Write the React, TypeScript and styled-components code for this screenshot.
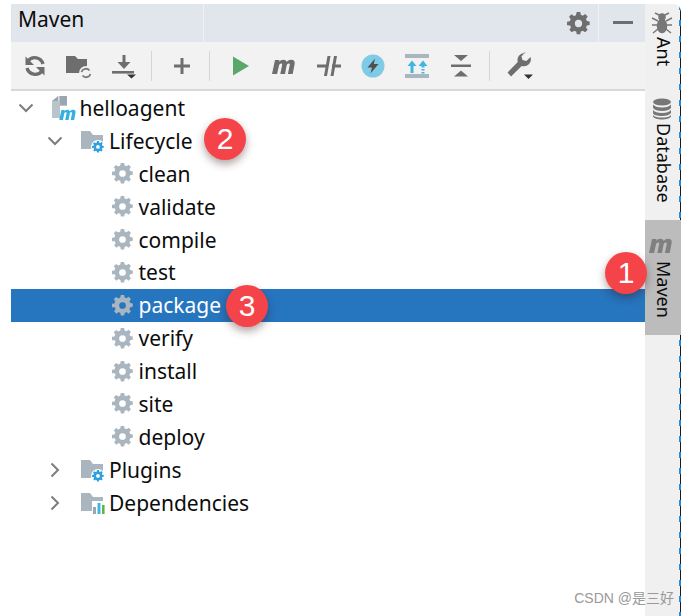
import React from "react";
import styled, { createGlobalStyle } from "styled-components";

const GlobalStyle = createGlobalStyle`
  html, body {
    margin: 0;
    padding: 0;
    background: #ffffff;
  }
`;

const Page = styled.div`
  position: relative;
  width: 689px;
  height: 616px;
  overflow: hidden;
  background: #ffffff;
  padding: 4px 0 0 11px;
  box-sizing: border-box;
  font-family: "Noto Sans", "Open Sans", sans-serif;
  color: #0c0c0c;
`;

const Frame = styled.div`
  display: flex;
  width: 670px;
  height: 612px;
`;

const Main = styled.div`
  flex: 1;
  display: flex;
  flex-direction: column;
  min-width: 0;
`;

const Header = styled.div`
  height: 38px;
  flex: none;
  display: flex;
  align-items: center;
  background: #e1e5ec;
`;

const Title = styled.div`
  width: 193px;
  height: 100%;
  box-sizing: border-box;
  padding-left: 7px;
  font-size: 21px;
  line-height: 31px;
  border-right: 1px solid #f0f2f5;
`;

const HeaderSpacer = styled.div`
  flex: 1;
`;

const HeaderAction = styled.div<{ $width: number; $divider?: boolean }>`
  width: ${(p) => p.$width}px;
  height: 100%;
  flex: none;
  display: flex;
  align-items: center;
  justify-content: center;
  border-right: ${(p) => (p.$divider ? "1px solid #f0f2f5" : "none")};
`;

const Toolbar = styled.div`
  height: 47px;
  flex: none;
  display: flex;
  align-items: center;
  padding-left: 2px;
  background: #f2f2f2;
  border-bottom: 2px solid #d8d8d8;
`;

const ToolSlot = styled.div`
  width: 44px;
  height: 30px;
  display: flex;
  align-items: center;
  justify-content: center;
`;

const ToolDivider = styled.div<{ $before: number; $after: number }>`
  width: 1px;
  height: 30px;
  margin: 0 ${(p) => p.$after}px 0 ${(p) => p.$before}px;
  background: #d6d6d6;
`;

const Tree = styled.div`
  padding-top: 0.6px;
  display: flex;
  flex-direction: column;
`;

const Row = styled.div<{ $depth: number; $selected?: boolean }>`
  height: 32.875px;
  display: flex;
  align-items: center;
  padding-left: ${(p) => 4.5 + p.$depth * 29.5}px;
  background: ${(p) => (p.$selected ? "#2675bf" : "transparent")};
  color: ${(p) => (p.$selected ? "#ffffff" : "#0c0c0c")};
  font-size: 21px;
`;

const Arrow = styled.div`
  width: 35px;
  flex: none;
  display: flex;
  align-items: center;
`;

const NodeIcon = styled.div`
  width: 25px;
  height: 26px;
  flex: none;
  display: flex;
  align-items: center;
  justify-content: center;
  margin-right: 4px;
`;

const Sidebar = styled.div`
  width: 36px;
  flex: none;
  display: flex;
  flex-direction: column;
  border-top-right-radius: 8px;
  background:
    repeating-linear-gradient(to bottom, #1f8ae0 0 6px, transparent 6px 16px) right 0 top 0 / 2px 100% no-repeat,
    linear-gradient(#1a1a1a, #1a1a1a) right 0 top 0 / 1px 100% no-repeat,
    #f0f0f0;
`;

const SideTab = styled.div<{ $height: number; $active?: boolean }>`
  height: ${(p) => p.$height}px;
  display: flex;
  flex-direction: column;
  align-items: center;
  gap: ${(p) => (p.$active ? 6 : 3)}px;
  padding: ${(p) => (p.$active ? 15 : 8)}px 2px 0 0;
  box-sizing: border-box;
  background: ${(p) => (p.$active ? "#bcbcbc" : "transparent")};
`;

const SideLabel = styled.span`
  writing-mode: vertical-rl;
  padding-left: 3px;
  font-size: 18px;
  line-height: 22px;
  color: #0c0c0c;
`;

const Badge = styled.div<{ $x: number; $y: number }>`
  position: absolute;
  left: ${(p) => p.$x - 21}px;
  top: ${(p) => p.$y - 21}px;
  width: 42px;
  height: 42px;
  border-radius: 50%;
  background: #f54449;
  color: #ffffff;
  font-family: "Liberation Sans", Arial, sans-serif;
  font-size: 30px;
  line-height: 42px;
  text-align: center;
  box-shadow: 0 4px 8px rgba(60, 20, 20, 0.4);
`;

const Watermark = styled.div`
  position: absolute;
  right: 15px;
  bottom: 9px;
  font-family: "Liberation Sans", "Noto Sans CJK SC", sans-serif;
  font-size: 14px;
  line-height: 18px;
  color: #999999;
`;

const GEAR =
  "M10.3 1h3.4l.5 2.7c.7.2 1.3.5 1.9.8l2.3-1.6 2.4 2.4-1.6 2.3c.3.6.6 1.2.8 1.9l2.7.5v3.4l-2.7.5c-.2.7-.5 1.3-.8 1.9l1.6 2.3-2.4 2.4-2.3-1.6c-.6.3-1.2.6-1.9.8l-.5 2.7h-3.4l-.5-2.7c-.7-.2-1.3-.5-1.9-.8l-2.3 1.6-2.4-2.4 1.6-2.3c-.3-.6-.6-1.2-.8-1.9L1 13.7v-3.4l2.7-.5c.2-.7.5-1.3.8-1.9L2.9 5.6l2.4-2.4 2.3 1.6c.6-.3 1.2-.6 1.900-.8zM12 8.500a3.500 3.500 0 1 0 0 7 3.500 3.500 0 0 0 0-7z";

const M_SHAPE =
  "M1 18 4 4h4.4l-.3 1.8C9.2 4.400 10.700 3.700 12.300 3.700c1.800 0 3 .8 3.400 2.300 1.200-1.500 2.800-2.300 4.500-2.300 2.800 0 4 1.700 3.400 4.500L21.700 18h-4.800l1.800-8.700c.3-1.300-.1-1.900-1-1.900-.9 0-1.800.7-2.100 2L14 18H9.300l1.800-8.700c.3-1.300-.1-1.900-1-1.900-.9 0-1.800.7-2.100 2L6.100 18z";

const Gear = ({ size, color }: { size: number; color: string }) => (
  <svg width={size} height={size} viewBox="0 0 24 24">
    <path d={GEAR} fill={color} fillRule="evenodd" />
  </svg>
);

const Chevron = ({ open }: { open: boolean }) => (
  <svg width="20" height="20" viewBox="0 0 20 20" fill="none" stroke="#7d7d7d" strokeWidth="2">
    {open ? <path d="M3.5 6.5 10 13l6.5-6.5" /> : <path d="M6.5 3.5 13 10l-6.5 6.5" />}
  </svg>
);

const ModuleIcon = () => (
  <svg width="25" height="26" viewBox="0 0 25 26">
    <path d="M1 6h6.500v-5H16v10H9v12H1z" fill="#b9c4cb" />
    <path d="M9 1h7v9H9z" fill="#9aa7b0" />
    <path d="M1 6l6-5v5z" fill="#9aa7b0" />
    <g transform="translate(7.500 12) scale(.72)">
      <path d={M_SHAPE} fill="#35b0e2" />
    </g>
  </svg>
);

const FolderBase = () => <path d="M1 3h9l3 4h10v14H1z" fill="#a9b6bf" />;

const FolderGear = () => (
  <svg width="25" height="26" viewBox="0 0 25 26">
    <FolderBase />
    <circle cx="18" cy="19" r="7" fill="#ffffff" />
    <g transform="translate(11.500 12.500) scale(.54)">
      <path d={GEAR} fill="#2f9fe0" fillRule="evenodd" />
    </g>
  </svg>
);

const FolderBars = () => (
  <svg width="25" height="26" viewBox="0 0 25 26">
    <FolderBase />
    <path d="M12 11h13v15H12z" fill="#ffffff" />
    <path d="M13 17h3v7h-3z" fill="#9aa7b0" />
    <path d="M17.500 13h3v11h-3z" fill="#40b6e0" />
    <path d="M22 15h2.600v9H22z" fill="#62b543" />
  </svg>
);

const RefreshIcon = () => (
  <svg width="24" height="24" viewBox="0 0 24 24" fill="none" stroke="#6e6e6e" strokeWidth="3.400">
    <path d="M20 10A8.500 8.500 0 0 0 5 7" />
    <path d="M4 14A8.500 8.500 0 0 0 19 17" />
    <path d="M2.500 2.500v8.500H11z" fill="#6e6e6e" stroke="none" />
    <path d="M21.500 21.500V13H13z" fill="#6e6e6e" stroke="none" />
  </svg>
);

const FolderRefreshIcon = () => (
  <svg width="26" height="26" viewBox="0 0 26 26">
    <path d="M0 3h9l3 3h9v14H0z" fill="#6e6e6e" />
    <circle cx="20" cy="20" r="7" fill="#f2f2f2" />
    <path d="M15.500 19a4.600 4.600 0 0 1 8-1.500M24.500 21a4.600 4.600 0 0 1-8 1.500" fill="none" stroke="#7b7b7b" strokeWidth="1.800" />
  </svg>
);

const DownloadIcon = () => (
  <svg width="26" height="26" viewBox="-2 0 26 26">
    <path d="M10.500 2h3v7h5l-6.500 7-6.500-7h5z" fill="#6e6e6e" />
    <path d="M0 18h22v2.600H0z" fill="#6e6e6e" />
    <path d="M15 21.500h9l-4.500 4z" fill="#333333" />
  </svg>
);

const PlusIcon = () => (
  <svg width="20" height="20" viewBox="0 0 20 20">
    <path d="M8.500 2h3v6.500H18v3h-6.500V18h-3v-6.500H2v-3h6.500z" fill="#6e6e6e" />
  </svg>
);

const PlayIcon = () => (
  <svg width="20" height="22" viewBox="0 0 20 22">
    <path d="M2 1.500 18 11 2 20.500z" fill="#59a869" />
  </svg>
);

const MavenIcon = ({ color }: { color: string }) => (
  <svg width="28" height="20" viewBox="0 0 28 20">
    <path d={M_SHAPE} fill={color} />
  </svg>
);

const SkipTestsIcon = () => (
  <svg width="26" height="26" viewBox="0 0 26 26">
    <path d="M1 11.500h8h1v3H1zM16 11.500h9v3h-9z" fill="#6e6e6e" />
    <path d="M11.500 3h3l-3.500 20H8zM18 3h3l-3.500 20h-3z" fill="#6e6e6e" />
  </svg>
);

const BoltIcon = () => (
  <svg width="24" height="24" viewBox="0 0 24 24">
    <circle cx="12" cy="12" r="11.500" fill="#7fcbe6" />
    <path d="M14 4.500 6.500 13.500H11l-1.500 6 8-9.500h-4.700z" fill="#4f4f4f" />
  </svg>
);

const ShowDepsIcon = () => (
  <svg width="26" height="26" viewBox="0 0 26 26">
    <path d="M1 1h24v4H1zM1 21h24v4H1z" fill="#a9b6bf" />
    <path d="M8 7.500 12.500 13h-3v7h-3v-7h-3z" fill="#40b6e0" />
    <path d="M19 7.500 23.500 13h-3v1.500h-3V13h-3zM17.500 16h3v1.500h-3zM17.500 19h3v1.500h-3z" fill="#40b6e0" />
  </svg>
);

const CollapseIcon = () => (
  <svg width="22" height="24" viewBox="0 0 22 24">
    <path d="M4 1h14l-7 6z" fill="#6e6e6e" />
    <path d="M1 10.500h20v2.500H1z" fill="#6e6e6e" />
    <path d="M11 16.500l7 6H4z" fill="#6e6e6e" />
  </svg>
);

const WrenchIcon = () => (
  <svg width="28" height="28" viewBox="0 0 28 28">
    <path
      d="M18.500 1a7 7 0 0 0-6.700 9L1.500 20.500 5 24.500l10.700-10.600a7 7 0 0 0 8.800-8.900l-4.100 4-3.900-.9-1-3.900 4-4c-.3 0-.6-.2-1-.2z"
      fill="#6e6e6e"
    />
    <path d="M18 22.500h9l-4.500 4.500z" fill="#333333" />
  </svg>
);

const AntIcon = () => (
  <svg width="22" height="22" viewBox="0 0 22 22" fill="none" stroke="#777777" strokeWidth="1.500">
    <ellipse cx="11" cy="5" rx="3" ry="3" fill="#777777" />
    <ellipse cx="11" cy="14" rx="4.500" ry="6.500" fill="#777777" />
    <path d="M8 3 4 1M14 3l4-2M7 9 1 6M15 9l6-3M6.500 13H1M15.500 13H21M7 17l-5 4M15 17l5 4" />
  </svg>
);

const DatabaseIcon = () => (
  <svg width="20" height="22" viewBox="0 0 20 22">
    <ellipse cx="10" cy="4" rx="9" ry="3.500" fill="#777777" />
    <path d="M1 6.500c1.500 2 4.500 3 9 3s7.500-1 9-3V10c-1.500 2-4.500 3-9 3s-7.500-1-9-3z" fill="#777777" />
    <path d="M1 12c1.500 2 4.500 3 9 3s7.500-1 9-3v3c-1.500 2-4.500 3-9 3s-9-1-9-3z" fill="#777777" />
    <path d="M1 17c1.500 2 4.500 2.500 9 2.500s7.500-.5 9-2.500v1.500c-1 2-4.500 3-9 3s-8-1-9-3z" fill="#777777" />
  </svg>
);

const MinimizeIcon = () => (
  <svg width="22" height="4" viewBox="-2 0 22 4">
    <path d="M0 0h20v3H0z" fill="#6e6e6e" />
  </svg>
);

const phases = ["clean", "validate", "compile", "test", "package", "verify", "install", "site", "deploy"];

export default function App() {
  return (
    <Page>
      <GlobalStyle />
      <Frame>
        <Main>
          <Header>
            <Title>Maven</Title>
            <HeaderSpacer />
            <HeaderAction $width={40} $divider>
              <Gear size={25} color="#6e6e6e" />
            </HeaderAction>
            <HeaderAction $width={46}>
              <MinimizeIcon />
            </HeaderAction>
          </Header>
          <Toolbar>
            <ToolSlot><RefreshIcon /></ToolSlot>
            <ToolSlot><FolderRefreshIcon /></ToolSlot>
            <ToolSlot><DownloadIcon /></ToolSlot>
            <ToolDivider $before={6} $after={8} />
            <ToolSlot><PlusIcon /></ToolSlot>
            <ToolDivider $before={5} $after={9} />
            <ToolSlot><PlayIcon /></ToolSlot>
            <ToolSlot><MavenIcon color="#6e6e6e" /></ToolSlot>
            <ToolSlot><SkipTestsIcon /></ToolSlot>
            <ToolSlot><BoltIcon /></ToolSlot>
            <ToolSlot><ShowDepsIcon /></ToolSlot>
            <ToolSlot><CollapseIcon /></ToolSlot>
            <ToolDivider $before={6} $after={8} />
            <ToolSlot><WrenchIcon /></ToolSlot>
          </Toolbar>
          <Tree>
            <Row $depth={0}>
              <Arrow><Chevron open /></Arrow>
              <NodeIcon><ModuleIcon /></NodeIcon>
              helloagent
            </Row>
            <Row $depth={1}>
              <Arrow><Chevron open /></Arrow>
              <NodeIcon><FolderGear /></NodeIcon>
              Lifecycle
            </Row>
            {phases.map((name) => (
              <Row key={name} $depth={2} $selected={name === "package"}>
                <Arrow />
                <NodeIcon><Gear size={23} color="#a9b6bf" /></NodeIcon>
                {name}
              </Row>
            ))}
            <Row $depth={1}>
              <Arrow><Chevron open={false} /></Arrow>
              <NodeIcon><FolderGear /></NodeIcon>
              Plugins
            </Row>
            <Row $depth={1}>
              <Arrow><Chevron open={false} /></Arrow>
              <NodeIcon><FolderBars /></NodeIcon>
              Dependencies
            </Row>
          </Tree>
        </Main>
        <Sidebar>
          <SideTab $height={86}>
            <AntIcon />
            <SideLabel>Ant</SideLabel>
          </SideTab>
          <SideTab $height={130}>
            <DatabaseIcon />
            <SideLabel>Database</SideLabel>
          </SideTab>
          <SideTab $height={115} $active>
            <MavenIcon color="#808080" />
            <SideLabel>Maven</SideLabel>
          </SideTab>
        </Sidebar>
      </Frame>
      <Badge $x={626} $y={273}>1</Badge>
      <Badge $x={225} $y={139}>2</Badge>
      <Badge $x={247} $y={306}>3</Badge>
      <Watermark>CSDN @是三好</Watermark>
    </Page>
  );
}
